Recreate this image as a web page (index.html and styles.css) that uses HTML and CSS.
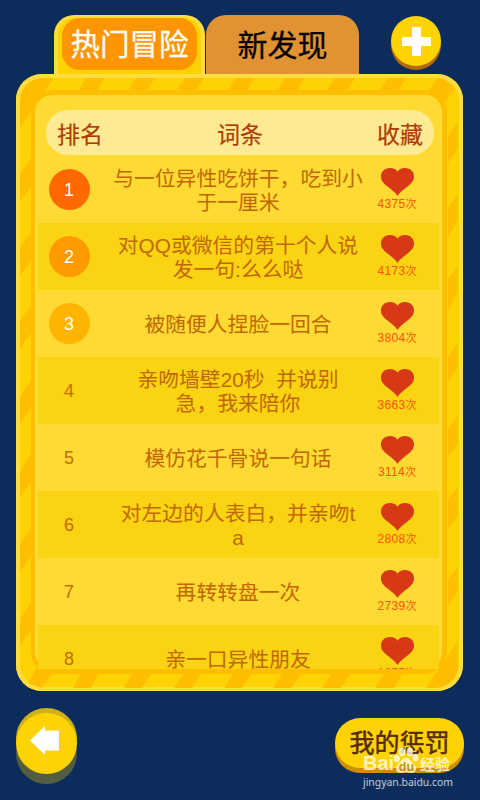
FILE: index.html
```html
<!DOCTYPE html>
<html lang="zh-CN">
<head>
<meta charset="utf-8">
<title>热门冒险</title>
<link rel="stylesheet" href="styles.css">
</head>
<body>
<svg class="defs" width="0" height="0"><symbol id="heart" viewBox="0 0 33 28"><path d="M16.500 28C15 25 11 22 6.500 18.500C2 15 0 12.500 0 8.500C0 3.500 3.800 0 9 0C12.500 0 15 1.200 16.500 3.800C18 1.200 20.500 0 24 0C29.200 0 33 3.500 33 8.500C33 12.500 31 15 26.500 18.500C22 22 18 25 16.500 28Z" fill="#d73815"/></symbol></svg>
<div class="app">
  <header class="top">
    <nav class="tabs">
      <div class="tab active"><span>热门冒险</span></div>
      <div class="tab">新发现</div>
    </nav>
    <button class="add" aria-label="添加"><svg width="29" height="29" viewBox="0 0 29 29"><path d="M10 0h9v10h10v9H19v10h-9V19H0v-9h10z" fill="#fff"/></svg></button>
  </header>
  <main class="board">
    <svg class="stripes" width="447" height="617" viewBox="16 74 447 617">
      <defs><clipPath id="inner"><rect x="20" y="78" width="438" height="610" rx="23"/></clipPath></defs>
      <g clip-path="url(#inner)" fill="#ffbf00">
        <path d="M54 78L45 91L31 112L20 128V78zM86 78h19l-8 13H78zM136 78h19l-8 13h-19zM185 78h19l-8 13h-20zM235 78h20l-8 13h-19zM285 78h20l-8 13h-20zM335 78h20l-8 13h-21zM388 78h18l-8 13h-18zM438 78h8L456 88L442 106L428 91z"/>
        <path d="M20 174L31 158V187L20 202zM20 248L31 232V261L20 276zM20 321L31 305V333L20 349zM20 397L31 380V408L20 424zM20 471L31 454V482L20 498zM20 545L31 528V556L20 572zM20 619L31 602V630L20 646z"/>
        <path d="M448 137L458 121V149L448 163zM448 208L458 193V221L448 237zM448 279L458 266V293L448 310zM448 357L458 342V367L448 382zM448 429L458 415V443L448 457zM448 500L458 486V515L448 529zM448 580L458 566V590L448 606zM440 668L458 640V674L448 688H426L435 674z"/>
        <path d="M28 684L36 668L52 674L42 688zM81 674h17l-7 14H73zM132 674h19l-9 14h-18zM183 674h18l-9 14h-18zM233 674h18l-9 14h-18zM282 674h19l-10 14h-18zM331 674h19l-9 14h-19zM384 674h18l-8 14h-19z"/>
      </g>
    </svg>
    <div class="panel">
      <div class="head"><span>排名</span><span>词条</span><span>收藏</span></div>
      <ol class="list">
        <li><div class="rank"><b class="r1">1</b></div><p>与一位异性吃饼干，吃到小<br>于一厘米</p><div class="fav"><svg><use href="#heart"/></svg><span>4375<i>次</i></span></div></li>
        <li><div class="rank"><b class="r2">2</b></div><p>对QQ或微信的第十个人说<br>发一句:么么哒</p><div class="fav"><svg><use href="#heart"/></svg><span>4173<i>次</i></span></div></li>
        <li><div class="rank"><b class="r3">3</b></div><p>被随便人捏脸一回合</p><div class="fav"><svg><use href="#heart"/></svg><span>3804<i>次</i></span></div></li>
        <li><div class="rank">4</div><p>亲吻墙壁20秒&nbsp; 并说别<br>急，我来陪你</p><div class="fav"><svg><use href="#heart"/></svg><span>3663<i>次</i></span></div></li>
        <li><div class="rank">5</div><p>模仿花千骨说一句话</p><div class="fav"><svg><use href="#heart"/></svg><span>3114<i>次</i></span></div></li>
        <li><div class="rank">6</div><p>对左边的人表白，并亲吻t<br>a</p><div class="fav"><svg><use href="#heart"/></svg><span>2808<i>次</i></span></div></li>
        <li><div class="rank">7</div><p>再转转盘一次</p><div class="fav"><svg><use href="#heart"/></svg><span>2739<i>次</i></span></div></li>
        <li><div class="rank">8</div><p>亲一口异性朋友</p><div class="fav"><svg><use href="#heart"/></svg><span>1955<i>次</i></span></div></li>
      </ol>
    </div>
  </main>
  <footer class="bottom">
    <button class="back" aria-label="返回"><svg width="61" height="76" viewBox="0 0 61 76"><circle cx="30.500" cy="45.500" r="30.500" fill="#535d42"/><circle cx="30.500" cy="30.500" r="30.500" fill="#ceb116"/><circle cx="30.500" cy="35.500" r="30.500" fill="#ffd203"/><path d="M14 32.500L29 18v4.500h14v20H29V47z" fill="#fff"/></svg></button>
    <button class="mine">我的惩罚</button>
  </footer>
  <div class="mark">
    <div class="brand"><span class="bai">Bai</span><svg width="26" height="27" viewBox="0 0 27 28"><g fill="#fff"><ellipse cx="3.800" cy="12" rx="3.300" ry="4"/><ellipse cx="9.300" cy="5" rx="3.300" ry="4.600"/><ellipse cx="17.500" cy="5" rx="3.300" ry="4.600"/><ellipse cx="23.200" cy="11" rx="3.300" ry="4"/><path d="M13.500 11C17 11 18 15 21 17C25 20 25 27 19 27C16 27 15 26 13.500 26S11 27 8 27C2 27 2 20 6 17C9 15 10 11 13.500 11Z"/></g><text x="6" y="25" class="du">du</text></svg><span class="exp">经验</span></div>
    <div class="url">jingyan.baidu.com</div>
  </div>
</div>
</body>
</html>
```

FILE: styles.css
```css
* { box-sizing: border-box; }
body { margin: 0; background: #0c2c5c; font-family: "Liberation Sans", "Noto Sans CJK SC", sans-serif; }
button { border: 0; padding: 0; background: none; font: inherit; }
.defs { display: block; }
.app { position: relative; width: 480px; height: 800px; overflow: hidden; background: #0c2c5c; }
.top { display: flex; justify-content: space-between; height: 74px; padding: 15px 39px 0 54px; }
.tabs { display: flex; gap: 1px; }
.tab { width: 153px; height: 59px; border-radius: 20px 20px 0 0; background: #e19233; color: #000; font-size: 30px; line-height: 61px; text-align: center; -webkit-text-stroke: .3px; }
.tab.active { width: 151px; padding: 0 4px; border: 4px solid #ffdc40; border-top-width: 3px; border-bottom: 0; background: #ffd303; color: #fff; }
.tab.active span { display: block; height: 52px; border-radius: 18px; background: #ff9500; font-size: 29.5px; line-height: 54px; }
.add { display: flex; align-items: center; justify-content: center; width: 50px; height: 50px; margin-top: 1px; border-radius: 50%; background: #ffd203; box-shadow: 0 4px 0 #b26b0a; }
.board { position: relative; width: 447px; height: 617px; margin-left: 16px; padding: 16px 16px 17px 15px; border-radius: 26px; background: #ffd303; box-shadow: inset 0 0 0 4px #ffdc40; }
.stripes { position: absolute; left: 0; top: 0; }
.panel { position: relative; height: 584px; padding: 15px 4px 0 3px; border: 5px solid #ffbf00; border-left-width: 4px; border-radius: 22px; background: #ffda33; }
.head { display: flex; justify-content: space-between; align-items: center; width: 388px; height: 45px; margin-left: 8px; padding: 0 11px; border-radius: 22px; background: #ffea94; color: #ad3b06; font-size: 23px; -webkit-text-stroke: .2px; }
.list { width: 401px; height: 513px; margin: 1px 0 0; padding: 0; overflow: hidden; list-style: none; }
li { display: grid; grid-template-columns: 62px 276px 42px; height: 67px; align-items: center; }
li:nth-child(even) { background: #fad312; }
.rank { display: flex; justify-content: center; color: #c26c05; font-size: 18px; padding-top: 2px; }
.rank b { width: 41px; height: 41px; margin-top: -2px; border-radius: 50%; color: #fff; font-weight: 400; line-height: 43px; text-align: center; }
.r1 { background: #ff6900; }
.r2 { background: #ff9b00; }
.r3 { background: #ffb400; }
p { margin: 3px 0 0; color: #c16804; font-size: 20.8px; line-height: 24px; text-align: center; white-space: nowrap; }
.fav { display: flex; flex-direction: column; align-items: center; align-self: start; padding-top: 12px; }
.fav svg { display: block; width: 33px; height: 28px; }
.fav span { margin-top: 1px; color: #ff5310; font-size: 12px; line-height: 14px; letter-spacing: .3px; white-space: nowrap; }
.fav i { font-size: 11px; font-style: normal; letter-spacing: 0; }
.bottom { display: flex; justify-content: space-between; padding: 17px 16px 0; }
.back { width: 61px; height: 76px; }
.back svg { display: block; }
.mine { width: 129px; height: 50px; margin-top: 10px; border-radius: 25px; background: #ffd203; box-shadow: 0 5px 0 #ce9000; color: #552b06; font-size: 25px; line-height: 50px; -webkit-text-stroke: .5px; }
.mark { position: absolute; left: 363px; top: 747px; width: 90px; color: #fff; opacity: .75; }
.brand { display: flex; align-items: flex-end; height: 27px; font-weight: 700; }
.bai { width: 30px; font-size: 20px; line-height: 21px; }
.exp { margin-left: 1px; font-size: 15px; line-height: 18px; }
.du { fill: #b98717; font-size: 13px; font-weight: 700; }
.url { font-family: "Noto Sans", sans-serif; font-size: 10.4px; line-height: 15px; margin-top: 1px; white-space: nowrap; }
```
